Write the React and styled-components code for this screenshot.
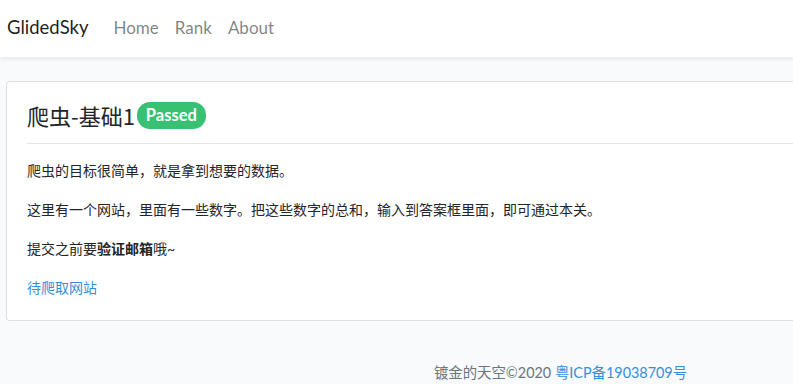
import React from "react";
import styled, { createGlobalStyle } from "styled-components";

const Global = createGlobalStyle`
  html, body { margin: 0; padding: 0; }
  body {
    background: #f8fafc;
    font-family: "Lato", "Noto Sans CJK SC", sans-serif;
    color: #212529;
    font-size: 14.4px;
    line-height: 1.6;
  }
`;

const Viewport = styled.div`
  width: 100%;
  overflow: hidden;
`;

const Page = styled.div`
  width: 1121px;
`;

const Navbar = styled.nav`
  height: 57px;
  background: #fff;
  box-shadow: 0 2px 4px rgba(0, 0, 0, 0.075);
  display: flex;
  align-items: center;
  padding: 0 7px 3px;
  box-sizing: border-box;
`;

const Brand = styled.a`
  font-size: 18.5px;
  color: rgba(0, 0, 0, 0.9);
  text-decoration: none;
  margin-right: 17px;
  line-height: 1;
`;

const NavLink = styled.a`
  font-size: 17px;
  color: rgba(0, 0, 0, 0.5);
  text-decoration: none;
  padding: 0 8px;
  line-height: 1;
`;

const Main = styled.main`
  padding: 24px 6px 0;
`;

const Card = styled.div`
  background: #fff;
  border: 1px solid rgba(0, 0, 0, 0.125);
  border-radius: 4px;
  padding: 20px 20px 21px;
`;

const Title = styled.h3`
  margin: 0;
  font-size: 22px;
  font-weight: 400;
  line-height: 1.2;
  display: flex;
  align-items: center;
  font-family: "Noto Sans CJK SC", sans-serif;
`;

const Badge = styled.span`
  background: #38c172;
  color: #fff;
  font-family: "Lato", sans-serif;
  font-weight: 700;
  font-size: 16.5px;
  line-height: 1;
  padding: 5px 9px 5px;
  border-radius: 13px;
  margin-left: 2px;
`;

const Rule = styled.hr`
  border: 0;
  border-top: 1px solid rgba(0, 0, 0, 0.1);
  margin: 14px 0 15px;
`;

const Para = styled.p`
  margin: 0 0 16px;
  font-size: 14px;
  line-height: 23px;
  &:last-child { margin-bottom: 0; }
`;

const Link = styled.a`
  color: #3490dc;
  text-decoration: none;
`;

const Footer = styled.footer`
  text-align: center;
  padding: 40px 0 0;
  font-size: 14.4px;
  color: #6c757d;
  line-height: 23px;
`;

export default function App() {
  return (
    <Viewport>
      <Global />
      <Page>
        <Navbar>
          <Brand href="#">GlidedSky</Brand>
          <NavLink href="#">Home</NavLink>
          <NavLink href="#">Rank</NavLink>
          <NavLink href="#">About</NavLink>
        </Navbar>
        <Main>
          <Card>
            <Title>
              爬虫-基础1<Badge>Passed</Badge>
            </Title>
            <Rule />
            <Para>爬虫的目标很简单，就是拿到想要的数据。</Para>
            <Para>这里有一个网站，里面有一些数字。把这些数字的总和，输入到答案框里面，即可通过本关。</Para>
            <Para>
              提交之前要<strong>验证邮箱</strong>哦~
            </Para>
            <Para>
              <Link href="#">待爬取网站</Link>
            </Para>
          </Card>
        </Main>
        <Footer>
          镀金的天空©2020 <Link href="#">粤ICP备19038709号</Link>
        </Footer>
      </Page>
    </Viewport>
  );
}
